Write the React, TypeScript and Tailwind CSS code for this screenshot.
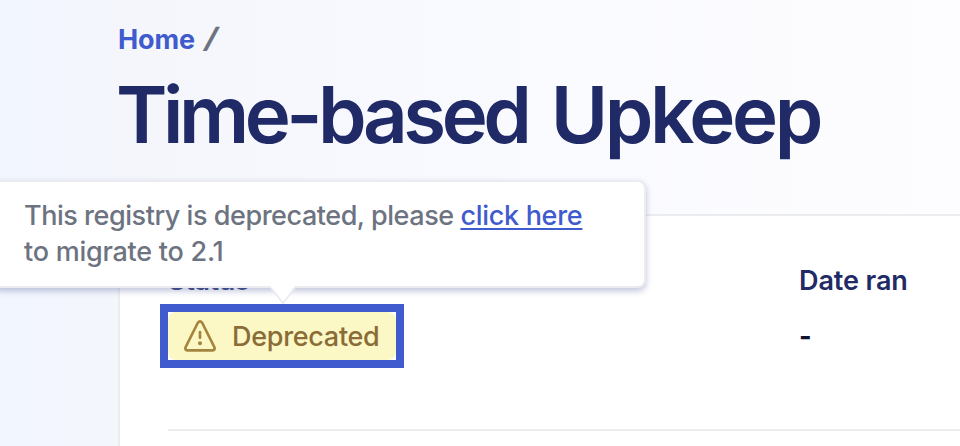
const WarningIcon = () => (
  <svg width="32" height="34" viewBox="0 0 32 34" fill="none" className="shrink-0">
    <path
      d="M13.7 4 Q16 0.8 18.3 4 L30.3 28 Q31.4 31.2 28.6 31.4 H3.4 Q0.6 31.2 1.7 28 Z"
      stroke="#a5843f"
      strokeWidth="2.7"
      strokeLinejoin="round"
    />
    <path d="M16 13.2 V18.8" stroke="#a5843f" strokeWidth="2.7" strokeLinecap="round" />
    <circle cx="16" cy="24.2" r="2" fill="#a5843f" />
  </svg>
);

const Tooltip = () => (
  <div className="absolute top-[180px] -left-2 h-[108px] w-[654px] rounded-lg border-2 border-[#ebecef] bg-white pt-[16px] pl-[30px] text-[27px] leading-9 font-medium text-[#6d7380] shadow-[0_3px_6px_rgba(60,75,140,0.32)]">
    <p className="whitespace-nowrap">
      <span className="tracking-[-0.46px]">This registry is deprecated, please </span>
      <a className="tracking-[-0.3px] text-[#3f5bcd] underline decoration-2 underline-offset-[3px]">click here</a>
    </p>
    <p className="tracking-[-0.25px] whitespace-nowrap">to migrate to 2.1</p>
    <svg className="absolute top-[104px] left-[276px]" width="26" height="18" viewBox="0 0 26 18">
      <path d="M0 0 H25 L13 17 Z" fill="#ffffff" />
      <path d="M1 2 L13 17 L25 2" fill="none" stroke="#e8eaf0" strokeWidth="1.6" />
    </svg>
  </div>
);

export default function App() {
  return (
    <div className="relative flex h-[446px] w-[960px] flex-col overflow-hidden bg-[linear-gradient(90deg,#f2f6ff_0px,#f4f6fc_120px,#f8f9fe_400px,#fdfdff_960px)] pl-[118px] font-['Inter','Liberation_Sans',sans-serif]">
      <nav className="mt-6 flex h-8 shrink-0 items-center gap-[11px] text-[27px] leading-8 font-bold">
        <a className="tracking-[-0.1px] text-[#3f5bcd]">Home</a>
        <span className="-mt-[4px] origin-center -skew-x-[15deg] text-[28px] font-extrabold text-[#6d7380]">/</span>
      </nav>
      <h1 className="mt-[11px] -ml-[2px] h-24 shrink-0 text-[78px] leading-[96px] font-semibold whitespace-nowrap text-[#1f2a66]">
        <span className="tracking-[-4.5px]">Time-based</span>
        <span className="tracking-[-3.4px] [word-spacing:7px]"> Upkeep</span>
      </h1>
      <section className="mt-auto h-[232px] shrink-0 border-t-2 border-l-2 border-[#ebecee] bg-white pl-10">
        <div className="flex h-[213px] pt-[47px] text-[27px] leading-9 font-semibold text-[#1f2a66]">
          <div className="w-[639px]">
            <div className="pl-2 tracking-[-0.4px] text-[#414c88]">Status</div>
            <div className="mt-[5px] h-16 w-[244px] border-8 border-[#3f5bcd] bg-white">
              <div className="flex h-12 items-center rounded-lg bg-[#fbf8c5] pl-4 font-medium text-[#8a6c36]">
                <WarningIcon />
                <span className="mt-[2px] ml-4 tracking-[-0.3px]">Deprecated</span>
              </div>
            </div>
          </div>
          <div>
            <div className="tracking-[-0.1px] whitespace-nowrap">Date ran</div>
            <div className="mt-5 font-bold text-[#0c1330]">-</div>
          </div>
        </div>
        <div className="ml-2 h-[2px] bg-[#ebecee]" />
      </section>
      <Tooltip />
    </div>
  );
}
